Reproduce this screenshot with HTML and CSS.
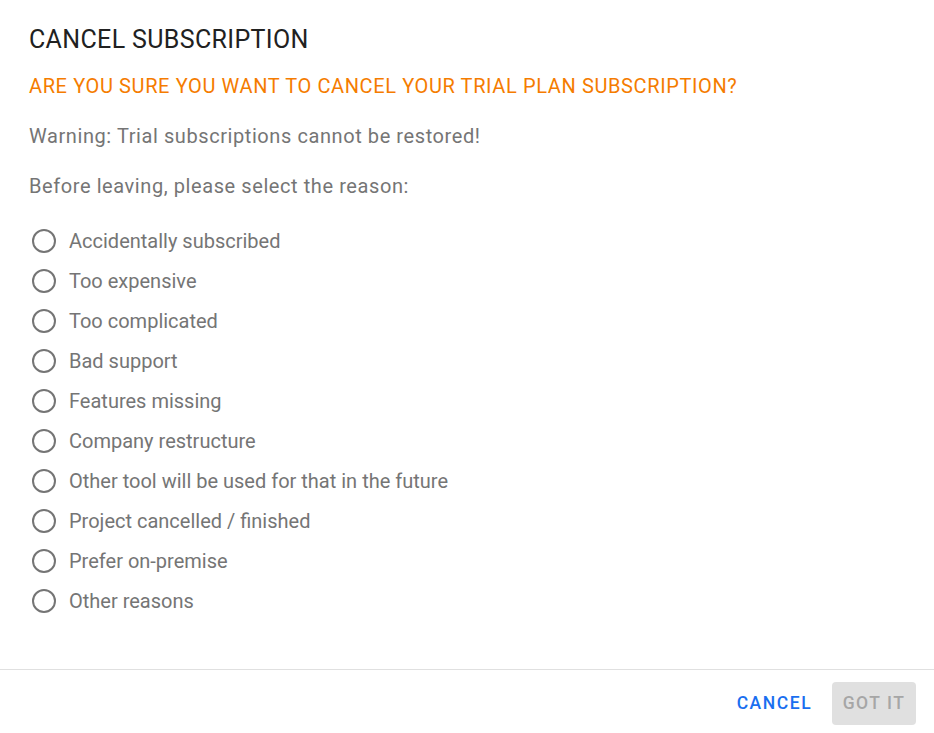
FILE: index.html
```html
<!DOCTYPE html>
<html>
<head>
<meta charset="utf-8">
<link rel="stylesheet" href="styles.css">
</head>
<body>
<div class="dialog">
  <div class="content">
    <h2 class="title">CANCEL SUBSCRIPTION</h2>
    <p class="question">ARE YOU SURE YOU WANT TO CANCEL YOUR TRIAL PLAN SUBSCRIPTION?</p>
    <p class="text warn">Warning: Trial subscriptions cannot be restored!</p>
    <p class="text">Before leaving, please select the reason:</p>
    <ul class="reasons">
      <li class="reason"><span class="radio"></span><span>Accidentally subscribed</span></li>
      <li class="reason"><span class="radio"></span><span>Too expensive</span></li>
      <li class="reason"><span class="radio"></span><span>Too complicated</span></li>
      <li class="reason"><span class="radio"></span><span>Bad support</span></li>
      <li class="reason"><span class="radio"></span><span>Features missing</span></li>
      <li class="reason"><span class="radio"></span><span>Company restructure</span></li>
      <li class="reason"><span class="radio"></span><span>Other tool will be used for that in the future</span></li>
      <li class="reason"><span class="radio"></span><span>Project cancelled / finished</span></li>
      <li class="reason"><span class="radio"></span><span>Prefer on-premise</span></li>
      <li class="reason"><span class="radio"></span><span>Other reasons</span></li>
    </ul>
  </div>
  <div class="footer">
    <button class="btn btn-cancel">CANCEL</button>
    <button class="btn btn-ok" disabled>GOT IT</button>
  </div>
</div>
</body>
</html>
```
FILE: styles.css
```css
* { box-sizing: border-box; }
html, body { margin: 0; padding: 0; background: #ffffff; }
body { font-family: Roboto, "Noto Sans", sans-serif; width: 934px; height: 733px; overflow: hidden; }
.dialog { width: 934px; height: 733px; background: #fff; display: flex; flex-direction: column; }
.content { padding: 26px 29px 0 29px; flex: 1; }
.title { margin: 0; font-size: 25px; font-weight: 400; color: #212121; line-height: 28px; letter-spacing: 0.35px; }
.question { margin: 22px 0 0 0; font-size: 20px; line-height: 20px; color: #f57c00; letter-spacing: 0.62px; }
.text { margin: 30px 0 0 0; font-size: 20px; line-height: 20px; color: #757575; letter-spacing: 0.58px; }
.reasons { list-style: none; margin: 25px 0 0 0; padding: 0; }
.reason { display: flex; align-items: center; height: 40px; font-size: 20px; color: #757575; letter-spacing: 0; }
.radio { width: 24px; height: 24px; border: 2px solid #757575; border-radius: 50%; margin-left: 3px; margin-right: 13px; flex: none; }
.footer { height: 64px; border-top: 1px solid #e0e0e0; display: flex; justify-content: flex-end; align-items: center; padding: 3px 18px 0 0; gap: 9.5px; }
.btn { font-family: Roboto, sans-serif; font-size: 17.5px; font-weight: 500; letter-spacing: 1.55px; border: none; background: none; height: 43px; padding: 0 10.5px; border-radius: 4px; }
.btn-cancel { color: #1a6ff0; }
.btn-ok { background: #e0e0e0; color: #a6a6a6; }
```
